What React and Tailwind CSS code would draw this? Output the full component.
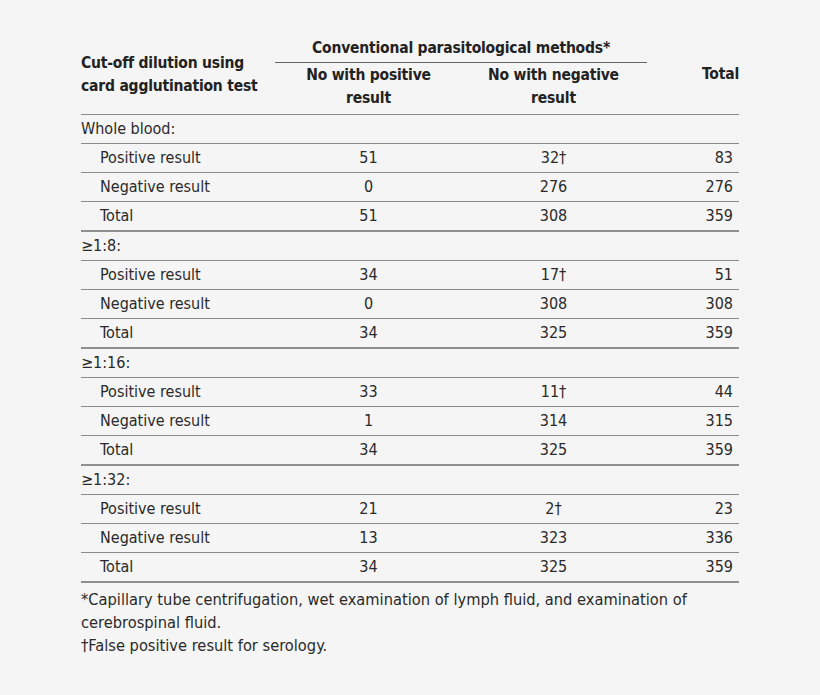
const groups = [
  {
    title: "Whole blood:",
    rows: [
      ["Positive result", "51", "32†", "83"],
      ["Negative result", "0", "276", "276"],
      ["Total", "51", "308", "359"],
    ],
  },
  {
    title: "≥1:8:",
    rows: [
      ["Positive result", "34", "17†", "51"],
      ["Negative result", "0", "308", "308"],
      ["Total", "34", "325", "359"],
    ],
  },
  {
    title: "≥1:16:",
    rows: [
      ["Positive result", "33", "11†", "44"],
      ["Negative result", "1", "314", "315"],
      ["Total", "34", "325", "359"],
    ],
  },
  {
    title: "≥1:32:",
    rows: [
      ["Positive result", "21", "2†", "23"],
      ["Negative result", "13", "323", "336"],
      ["Total", "34", "325", "359"],
    ],
  },
];

const font = { fontFamily: '"Liberation Sans Narrow", "DejaVu Sans Condensed", "Liberation Sans", sans-serif' };

const App = () => {
  return (
    <div className="w-[820px] h-[695px] bg-[#f5f5f5] text-[#2a2a2a] overflow-hidden" style={font}>
      <div className="pt-[34px] pl-[81px] w-[739px]">
        {/* header */}
        <div className="flex h-[81px] border-b border-[#8a8a8a] font-bold text-[15.5px] tracking-[-0.2px] leading-[23px] whitespace-nowrap text-[#222]">
          <div className="w-[195px] flex items-center pt-[1px]">
            <div>
              Cut-off dilution using
              <br />
              card agglutination test
            </div>
          </div>
          <div className="w-[370px] flex flex-col">
            <div className="h-[29px] mx-[-1px] flex items-center justify-center border-b border-[#666]">
              Conventional parasitological methods*
            </div>
            <div className="flex pt-[1px]">
              <div className="w-[185px] text-center">
                No with positive
                <br />
                result
              </div>
              <div className="w-[185px] text-center">
                No with negative
                <br />
                result
              </div>
            </div>
          </div>
          <div className="w-[93px] flex items-center justify-end pt-[1px]">Total</div>
        </div>

        {/* body */}
        {groups.map((g, gi) => (
          <div key={gi} className="text-[16px]">
            <div className="h-[29px] flex items-center border-b border-[#8a8a8a]">{g.title}</div>
            {g.rows.map((r, ri) => (
              <div
                key={ri}
                className={
                  ri === 2
                    ? "h-[30px] flex items-center border-b-2 border-[#8f8f8f]"
                    : "h-[29px] flex items-center border-b border-[#8a8a8a]"
                }
              >
                <div className="w-[195px] pl-[19px]">{r[0]}</div>
                <div className="w-[185px] text-center">{r[1]}</div>
                <div className="w-[185px] text-center">{r[2]}</div>
                <div className="w-[93px] text-right pr-[6px]">{r[3]}</div>
              </div>
            ))}
          </div>
        ))}

        {/* footnotes */}
        <div className="mt-[5px] text-[16.3px] leading-[23px]">
          <div>*Capillary tube centrifugation, wet examination of lymph fluid, and examination of</div>
          <div>cerebrospinal fluid.</div>
          <div>†False positive result for serology.</div>
        </div>
      </div>
    </div>
  );
};

export default App;
